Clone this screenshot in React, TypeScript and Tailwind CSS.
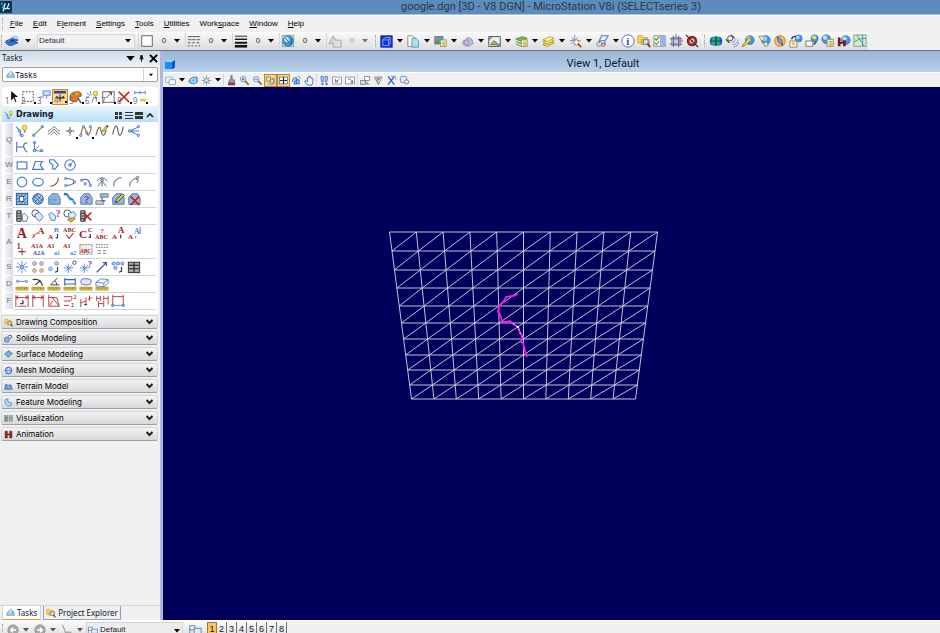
import React from 'react';

interface LineProps {
  d: string;
  s?: string;
  f?: string;
  w?: number;
}

const L: React.FC<LineProps> = ({ d, s = '#3d6fc4', f = 'none', w = 1 }) => (
  <path d={d} stroke={s} fill={f} strokeWidth={w} />
);

const C: React.FC<{ x: number; y: number; r: number; s?: string; f?: string; w?: number }> = ({ x, y, r, s = '#3d6fc4', f = 'none', w = 1 }) => (
  <circle cx={x} cy={y} r={r} stroke={s} fill={f} strokeWidth={w} />
);

const T: React.FC<{ x: number; y: number; z: number; c?: string; children: string }> = ({ x, y, z, c = '#9c1c1c', children }) => (
  <text x={x} y={y} fontSize={z} fill={c} fontWeight="bold" fontFamily="Liberation Serif, serif">
    {children}
  </text>
);

const Globe = ({ x = 8, y = 8, r = 5 }) => (
  <>
    <C x={x} y={y} r={r} s="#3b78b8" f="#3f98dd" />
    <C x={x - r / 4} y={y - r / 3} r={r / 2} s="none" f="#b7e0f7" />
  </>
);

const Sheet = ({ x = 7, y = 6 }) => (
  <>
    <rect x={x} y={y} width="7" height="8" fill="#fbf3c4" stroke="#b38a2e" />
    <path d={`M${x + 2} ${y + 2.5}h4M${x + 2} ${y + 4.5}h4M${x + 2} ${y + 6.5}h4`} stroke="#8a7b4a" strokeWidth="0.8" />
  </>
);

const Bulb = ({ x = 10, y = 4 }) => (
  <>
    <C x={x} y={y} r={2.6} s="#b99a1c" f="#f6ea3a" />
    <path d={`M${x - 1} ${y + 3.5}h2v2h-2z`} fill="#6a5a20" />
  </>
);

const Ruler = () => (
  <>
    <rect x="1" y="11.5" width="14" height="3.5" fill="#e0c83e" stroke="#9a851c" strokeWidth="0.6" />
    <path d="M3 12v2M5 12v1.5M7 12v2M9 12v1.5M11 12v2M13 12v1.5" stroke="#6d5e12" strokeWidth="0.7" />
  </>
);

const Blob = () => <L d="M2 13V6l4-4h6l3 5v7H2z" s="#44749f" f="#8db9e2" />;

const BLUE = '#4a7fd6';
const RED = '#b03030';
const DARK = '#3a3a3a';
const PINK = '#b020b0';

const icons: Record<string, React.ReactNode> = {
  logo: <><rect width="16" height="16" fill="#0c3550" /><L d="M4 14L7 3M6 9q0 3 4 0L12 3M10 8q0 3 3 2" s="#dff3fa" w={1.6} /><L d="M1 5l3-3M2 10l3-5" s="#3ea5bd" w={1.5} /></>,
  level: <><L d="M5 6l6-4 4 2-5 5z" s="#8ab0e0" f="#c9defa" /><L d="M1 8l8-3 6 2-7 4z" s="#2d4f86" f="#3b8fe0" /><L d="M0 9q3 5 8 4l7-3-6-1q-5 2-9 0z" s="#2056c0" f="#2f7be0" /><L d="M5 8l4-2 3 1-4 2z" s="none" f="#133b75" /></>,
  colorBox: <rect x="2" y="2" width="12" height="12" fill="#fff" stroke="#555" />,
  style: <L d="M1 3h14M1 6.5h4m1 0h4m1 0h4M1 10h3m2 0h3m2 0h3M1 13.5h2m2 0h2m2 0h2m2 0h2" s="#444" />,
  weight: <><L d="M1 2.5h14" s="#111" /><L d="M1 6h14" s="#111" w={1.6} /><L d="M1 10h14" s="#111" w={2.2} /><L d="M1 14h14" s="#111" w={3} /></>,
  globe: <><rect x="1.5" y="1.5" width="13" height="13" fill="#c7d9c9" stroke="#8aa7a8" /><Globe x={8} y={8} r={6} /><L d="M4 4l8 8M11 3q3 4 0 10" s="#2265a8" /></>,
  priority: <><L d="M1 11l5-9 5 9z" s="#a5a5a5" f="#d2d2d2" /><L d="M8 7h7v8H6v-4" s="#a5a5a5" f="#dedede" /></>,
  cube: <><rect x="1" y="1" width="14" height="14" fill="#1534d8" stroke="#0b1f9a" /><L d="M3.5 6h7v7h-7zM3.5 6l3-3h6v7l-2 3M10.5 6l2-3" s="#8fb6ff" /></>,
  refs: <><L d="M1 1h6l3 3v10H1z" s="#777" f="#fff" /><L d="M6 4h5l3 3v8H6z" s="#4b93a8" f="#a8e4ea" /></>,
  raster: <><rect x="1" y="2" width="10" height="9" fill="#33a3e0" stroke="#5a6b7a" /><L d="M1 11l4-5 3 5z" s="none" f="#4da03a" /><L d="M1 3h5v3H1z" s="none" f="#e07a2a" /><Sheet x={8} y={6} /></>,
  cloud: <><L d="M2 11l1-4 3-1 2-3 5 2 2 5-3 3-5 1z" s="#768da8" f="#a9c7e6" /><C x={7} y={9} r={3} s="#a06aa8" f="#dfb5d4" w={0.8} /></>,
  image: <><rect x="1" y="2" width="14" height="12" fill="#e9f3e2" stroke="#3d3d3d" /><L d="M3 12l4-5 3 2 3 3z" s="#3a6f7a" f="#d3a04a" /><L d="M2 2h4L1 7zM15 9v5h-5z" s="none" f="#6a8ac0" /></>,
  layers: <><L d="M1 5l8-3 6 2-7 4zM1 8l7 3 3-1M1 11l7 3" s="#2b8b35" f="#5ec962" /><Sheet x={8} y={6} /></>,
  stack: <><L d="M1 12l9-4 5 2-8 4z" s="#ad9223" f="#eed85e" /><L d="M1 9l9-4 5 2-8 4z" s="#ad9223" f="#f6e88a" /><L d="M1 6l9-4 5 2-8 4z" s="#ad9223" f="#fff3a8" /></>,
  aim: <><L d="M7 0v13M1 7h13M3 3l9 9M11 3l-8 8" s={BLUE} /><C x={9} y={9} r={3} s="#c07a2a" f="#fff" /><L d="M11 11l4 4" s="#8a4a1c" w={2} /></>,
  sketch: <><L d="M7 1h8l-4 6H4zM11 7v5M4 7v3" s={BLUE} w={1.3} /><C x={4} y={11} r={3} s="#4b9a5b" /><C x={9} y={12} r={2} s={RED} /></>,
  info: <><C x={8} y={8} r={7} s="#3566c9" f="#fff" /><T x={6} y={12} z={12} c="#2048c0">i</T></>,
  folders: <><L d="M1 2h5l1 2h5v6H1z" s="#e0a030" f="#fbd25a" /><L d="M5 6h9v6H5z" s="#e09a2c" f="#fbb33a" /><C x={10} y={9} r={3} s="#3978c0" f="#b9ecff" /><L d="M12 11l3 4" s="#a03020" w={2} /></>,
  checks: <><L d="M1 2h13v12H1z" s="#888" f="#f7f7ef" /><L d="M8 2h6v12H8z" s="none" f="#8eb5ec" /><L d="M2 5l2 2 3-4M2 10l2 2 3-4" s="#4b8b2b" w={1.2} /></>,
  fence: <><L d="M3 4h10v9H3z" s="#9090c0" f="#c9c9ea" /><L d="M1 5.5h14M1 11.5h14M5 2v13M11 2v13" s="#56568a" strokeDasharray="1" /><L d="M8 0v5" s="#4bbf4b" w={1.4} /><L d="M11 8h5" s="#d84bb0" w={1.4} /></>,
  noTarget: <><C x={8} y={8} r={5} s="#8a1c1c" f="#c54a4a" w={2} /><C x={8} y={8} r={2} s="#fff" /><L d="M1 1l14 14" s="#333" w={1.5} /></>,
  earth: <><rect x="1" y="3" width="14" height="10" rx="4" fill="#1564dc" /><L d="M3 4h4v8H3zM9 3h3v10H9z" s="none" f="#26ba3b" /><L d="M1 8h14M8 2v12" s="#0a3c9a" /></>,
  gps: <><C x={6} y={5} r={3} s="#444" /><L d="M1 6l4 4M7 1l4 4" s="#444" w={1.5} /><L d="M8 10q3 0 4-4M9 12q5 0 6-6M10 15q5-1 6-6" s="#6690d8" /></>,
  keyGlobe: <><Globe x={10} y={7} r={5} /><L d="M1 14l5-6 3-4 3 3-4 3-5 4z" s="#8a7a1c" f="#f4e13a" /></>,
  handGlobe: <><Globe x={10} y={7} r={5} /><L d="M2 3l4-1 3 4-3 2zM7 10l4-1 2 4-4 1z" s="#888" f="#eee7c9" /></>,
  compass: <><C x={8} y={8} r={6} s="#e0983a" f="#f8c05a" w={1.5} /><L d="M5 3l5 4 1 6-5-4z" s="#3050a0" f="#7aa4f0" /></>,
  placeA: <><Globe x={11} y={5} r={4} /><L d="M1 8h8v7H1z" s="#777" f="#fffbe0" /><C x={5} y={11} r={2} s="none" f="#f4c51c" /><L d="M3 6q1-4 5-3" s="#333" w={1.5} /></>,
  placeB: <><Globe x={11} y={5} r={4} /><C x={11} y={4} r={2} s="none" f="#f4e13a" /><L d="M1 8h8v6H1z" s="#666" f="#fff" /><L d="M10 12l3-3" s="#333" w={1.5} /></>,
  placeC: <><Globe x={6} y={6} r={5} /><Sheet x={7} y={6} /></>,
  film: <><Globe x={10} y={7} r={5} /><L d="M1 4h3v10H1zM7 7h3v7H7zM4 9h3v2H4z" s="none" f="#6b1c1c" /></>,
  map: <><rect x="1" y="1" width="14" height="13" fill="#dceab5" stroke="#7d9a9c" /><L d="M1 9q7-5 14-4M4 1l9 13M11 1v13" s="#3b8bc9" /></>,

  monitor: <><rect x="1" y="3" width="10" height="8" fill="#eef4fc" stroke="#7d9cc8" /><rect x="6" y="7" width="9" height="7" fill="#fff" stroke="#5b82c0" /></>,
  eyeBlue: <><L d="M1 10q2-8 12-7l1 7q-6 6-13 0z" s="#3b78b8" f="#65b5e8" /><C x={8} y={8} r={3} s="#fff" /></>,
  sun: <><L d="M8 1v14M1 8h14M3 3l10 10M13 3L3 13" s="#6a7f92" /><C x={8} y={8} r={3} s="#55779a" f="#cde7f2" /></>,
  brush: <><L d="M7 1h2v6h3l1 7H3l2-7h2z" s="#49607a" f="#87a9c9" /><L d="M4 11h8l1 4H3z" s="none" f="#a03535" /></>,
  zoomIn: <><C x={6} y={6} r={4} s="#4b76b8" f="#e2f0fb" /><L d="M9 9l5 5" s="#946035" w={2.5} /><L d="M4 6h4M6 4v4" s={DARK} /></>,
  zoomOut: <><C x={6} y={6} r={4} s="#4b76b8" f="#e2f0fb" /><L d="M9 9l5 5" s="#946035" w={2.5} /><L d="M4 6h4" s={DARK} /></>,
  winArea: <><L d="M2 3h6v6H2zM5 13h8V5h-3" s="#5c6670" f="#f8e394" /><C x={10} y={9} r={3} s={BLUE} /></>,
  fit: <><rect x="2" y="3" width="12" height="10" fill="#eef0f6" stroke="#5c6670" /><L d="M8 3v10M3 8h4m2 0h4" s="#222" w={1.5} /></>,
  rotate: <><L d="M2 10q0-7 6-6v9M8 7h4v6H4z" s="#2f6fc0" f="#9cc7f0" w={1.3} /><L d="M10 1l4 4" s={DARK} /></>,
  hand: <L d="M4 14l-3-5 2-1 2 2V4h2V2h2v2h2v1h2v6l-2 4z" s="#3e68c8" f="#eef4ff" w={1.3} />,
  walk: <L d="M3 2h3v8q-3 2-3-8zM9 2h3q1 9-3 8zM4 12h2v2H4zM10 12h2v2h-2z" s="#4169b8" f="#d8e4f8" w={1.3} />,
  viewPrev: <><rect x="1" y="3" width="13" height="10" fill="#fff" stroke="#65748a" /><L d="M11 6L5 10M5 6v4h4" s={DARK} /></>,
  viewNext: <><rect x="1" y="3" width="13" height="10" fill="#fff" stroke="#65748a" /><L d="M4 6q5-1 7 5M11 8v3H8" s={DARK} /></>,
  copyView: <><rect x="7" y="2" width="7" height="6" fill="#fff" stroke="#666" /><rect x="1" y="8" width="7" height="6" fill="#ddd" stroke="#666" /><L d="M10 10v3h3" s={DARK} /></>,
  clip: <L d="M2 3h11l-5 11zM4 6l7-2M5 8l5-2M7 12V4" s="#60646c" />,
  clipMask: <><L d="M3 2l9 12M12 2L3 14" s="#2f62c8" w={2} /><L d="M7 2h7v5" s="#888" /></>,
  clipBox: <><rect x="2" y="2" width="9" height="9" rx="2" fill="#dceaff" stroke="#4871b8" /><C x={11} y={10} r={3} s="#555" f="#eee" /></>,

  pointer: <L d="M7 1v11l3-3 2 5 1-1-2-5h4z" s="none" f="#111" />,
  marquee: <path d="M2 2h12v11H2z" fill="none" stroke="#333" strokeDasharray="2 1.5" />,
  chain: <><rect x="7" y="1" width="8" height="5" fill="#cfe3fb" stroke={BLUE} /><L d="M3 8h5M11 6v4" s={BLUE} /></>,
  measure: <><rect x="1" y="1" width="14" height="3" fill="#2c4d86" /><L d="M3 9h10M8 5v8M3 9l2-2M13 9l-2-2" s="#222" w={1.2} /></>,
  palette: <><L d="M1 8q1-6 8-6 6 0 5 5-4 0-5 6-8 2-8-5z" s="#9d4b14" f="#dd7b22" /><C x={5} y={5} r={1} s="none" f="#31bf46" /><C x={9} y={4} r={1} s="none" f="#fff04a" /><L d="M10 9l4 6" s="#3468d0" w={2} /></>,
  modify: <><L d="M2 3l4 4M6 1l1 5M1 8h4M10 8l-2 6M13 8v5" s={BLUE} /><Bulb x={12} y={4} /></>,
  scale: <><rect x="2" y="2" width="13" height="12" fill="#fff" stroke="#555" /><L d="M6 9l6-6M9 3h3v3" s={DARK} /></>,
  cross: <L d="M2 2l12 12M14 2L2 14" s="#d31c1c" w={2} />,
  dimension: <><L d="M2 3h12M2 1v4M14 1v4M8 1v4" s={BLUE} /><rect x="8" y="10" width="7" height="3" fill="#e0c83e" /></>,

  smartline: <><L d="M1 3l5 5v6" s={BLUE} w={1.3} /><C x={5} y={8} r={1.3} f="#cfe0fb" /><C x={8} y={13} r={1.5} f="#cfe0fb" /><Bulb x={11} y={4} /></>,
  line: <><L d="M3 13L13 3" s="#777" w={1.2} /><C x={3} y={13} r={1.3} f="#9cc0f5" /><C x={13} y={3} r={1.3} f="#9cc0f5" /></>,
  multiline: <L d="M1 9l7-6 7 6M1 12l7-6 7 6M4 13l4-4 4 4" s="#5c6778" />,
  point: <><L d="M8 3v10M3 8h10" s="#776340" w={1.2} /><C x={8} y={8} r={1.6} f="#b4d0f8" /></>,
  curve: <><L d="M2 13Q5-3 8 8t6-4" s="#9b7038" w={1.3} /><C x={2} y={13} r={1.3} f="#cfe0fb" /><C x={5} y={3} r={1.3} f="#cfe0fb" /><C x={9} y={10} r={1.3} f="#cfe0fb" /><C x={13} y={3} r={1.3} f="#cfe0fb" /></>,
  freehand: <><L d="M1 13Q5-2 7 8t6-1" s="#555" w={1.2} /><L d="M8 8l5-6 2 1-5 6z" s="#9b7b1c" f="#ecd83a" /><L d="M13 2l2 1" s="#c02020" w={2} /></>,
  bspline: <L d="M2 12C4 0 7 0 8 8S12 14 14 3" s="#666" w={1.3} />,
  spread: <><L d="M3 8l11-5M3 8l11 0M3 8l11 5" s={BLUE} w={1.2} /><C x={3} y={8} r={1.5} f="#cfe0fb" /><C x={13} y={3} r={1.3} f="#cfe0fb" /><C x={13} y={13} r={1.3} f="#cfe0fb" /></>,
  bisect: <L d="M2 2v12M2 8h8M14 3q-5 1-4 5t4 6" s="#4d6a91" w={1.2} />,
  perp: <><L d="M4 2v10l10 1M4 12l5-5" s="#4a75b8" /><C x={4} y={3} r={1.3} f="#9cc0f5" /><C x={4} y={12} r={1.5} f="#9cc0f5" /><C x={12} y={12} r={1.3} f="#9cc0f5" /></>,
  block: <rect x="2.5" y="4.5" width="11" height="8" fill="#fff" stroke={BLUE} strokeWidth="1.4" />,
  shape: <L d="M2 13l3-9h8q-3 3-2 5l3 4z" s={BLUE} w={1.4} />,
  orthoShape: <L d="M3 2h5l5 6-4 5-3-1 1-4-4-3z" s={BLUE} w={1.4} />,
  polygon: <><C x={8} y={8} r={6} s={BLUE} w={1.3} /><C x={8} y={8} r={1.5} f="#9cc0f5" /><L d="M8 8l4-5" s={BLUE} /></>,
  circle: <C x={8} y={8} r={5.5} s={BLUE} w={1.4} />,
  ellipse: <ellipse cx="8" cy="8" rx="6" ry="4.3" fill="none" stroke={BLUE} strokeWidth="1.4" />,
  arc: <L d="M13 3q0 8-9 10" s="#8a6236" w={1.4} />,
  arcEdge: <><L d="M3 4q10 0 10 4-2 4-10 4" s="#4b68a8" w={1.2} /><C x={3} y={4} r={1.3} f="#cfe0fb" /><C x={13} y={8} r={1.3} f="#cfe0fb" /><C x={3} y={12} r={1.3} f="#cfe0fb" /></>,
  halfEllipse: <><L d="M3 6q8-4 10 6" s="#4b68a8" w={1.2} /><C x={3} y={6} r={1.3} f="#cfe0fb" /><C x={7} y={10} r={1.3} f="#cfe0fb" /><C x={13} y={12} r={1.3} f="#cfe0fb" /></>,
  quarter: <><L d="M2 7q6-8 12 0M8 7l-5 6M8 7l5 6M8 7v6" s="#555" /><C x={8} y={6} r={1.6} f="#9cc0f5" /></>,
  arcRadius: <L d="M3 13q0-9 9-10" s="#7187a8" w={1.2} />,
  arcAngle: <><L d="M3 13q0-6 6-9l4 2-2 3" s="#555" /><C x={12} y={3} r={1.5} f="#f0bb68" s="#777" /></>,

  hatch: <><rect x="1.5" y="1.5" width="13" height="13" fill="#9cc6ee" stroke="#174d8b" /><L d="M2 5l3-3M2 9l7-7M2 13l11-11M6 14l7-7M10 14l3-3" s="#174d8b" /><rect x="5" y="5" width="5" height="6" fill="#fff" stroke="#174d8b" /></>,
  crosshatch: <><C x={8} y={8} r={6} s="#174d8b" f="#a3cbf3" /><L d="M3 4l9 9M5 2l8 8M3 8l5 5M12 4l-8 8M8 2l-6 6M14 7l-6 6" s="#174d8b" w={0.8} /></>,
  patArea: <><Blob /><L d="M4 14V6M7 14V4M10 14V5M2 9h11" s="#6395bf" w={0.6} /></>,
  patLine: <><L d="M1 2l4 1 2 4 4 2 3 5" s="#2a67b8" w={2.5} /><L d="M2 4l3 0 2 5 5 1 1 4" s="#8cd8ef" /></>,
  patAsk: <><Blob /><T x={6} y={12} z={12} c={PINK}>?</T></>,
  patMatch: <><L d="M6 2h9v4H6z" s="#777" f="#8dbde8" /><L d="M1 10h9v4H1z" s="#777" f="#b3d4ef" /><L d="M8 6v4h4" s={DARK} /></>,
  patEdit: <><Blob /><L d="M5 12l1-3 7-7 2 2-7 7z" s="#222" f="#f4dc3a" /></>,
  patDelete: <><Blob /><L d="M4 5l10 10M14 5L4 15" s="#d31c1c" w={1.8} /></>,

  tagA: <><L d="M2 2h5v12H2z" s="#222" f="#bbb" /><L d="M2 5h5M2 8h5M2 11h5" s="#222" /><L d="M8 7l3-2 4 4-2 5H9z" s="#3b67a8" f="#fff" /></>,
  tagB: <><C x={5} y={5} r={4} s="#444" /><L d="M4 6l6-2 4 5-4 5-4-3z" s="#4477b8" f="#d8ebfc" /></>,
  tagAsk: <><L d="M2 6l3-2 5 4-1 5H5z" s="#4477b8" f="#d8ebfc" /><T x={10} y={9} z={11} c={PINK}>?</T></>,
  tagC: <><C x={5} y={5} r={4} s="#444" /><L d="M6 5l6-2 3 4-4 5-4-2z" s="#4477b8" f="#d8ebfc" /><L d="M5 12l4 3 5-4-3-1z" s="#a36b1c" f="#ebb24a" /></>,
  tagDel: <><L d="M2 2h5v12H2z" s="#222" f="#bbb" /><L d="M2 5h5M2 8h5M2 11h5" s="#222" /><L d="M5 4l9 9M14 4l-9 9" s="#c02020" w={1.8} /></>,

  text: <T x={2} y={14} z={16}>A</T>,
  textNote: <><T x={8} y={9} z={10}>A</T><L d="M1 13l3-1-2-3M3 12l3-4h3" s={RED} /></>,
  textAB: <><T x={1} y={15} z={8}>A</T><T x={8} y={7} z={8} c={BLUE}>B</T><L d="M12 9v4l-2 1" s={DARK} w={1.4} /></>,
  textCheck: <><T x={0} y={7} z={7}>ABC</T><L d="M4 10l3 4 5-6" s={RED} w={1.3} /></>,
  textCC: <><T x={0} y={14} z={13}>C</T><T x={10} y={7} z={8}>C</T><L d="M13 9v4h-2" s={DARK} w={1.4} /></>,
  textAskAbc: <><T x={0} y={15} z={7}>ABC</T><T x={6} y={8} z={8} c={PINK}>?</T></>,
  textAA: <><T x={1} y={15} z={8}>A</T><T x={8} y={8} z={10}>A</T><L d="M11 10v4" s={DARK} w={1.4} /></>,
  textBlueA: <><T x={1} y={15} z={8}>A</T><T x={8} y={9} z={9} c={BLUE}>A</T><L d="M15 1v8M10 11v3" s={BLUE} w={1.2} /></>,
  node: <><T x={2} y={8} z={9}>1</T><L d="M8 7v8M4 11h8" s={RED} w={1.2} /></>,
  copyInc: <><T x={0} y={7} z={7}>A1A</T><T x={2} y={15} z={7} c="#4d4da8">A2A</T></>,
  editInc: <><T x={0} y={7} z={7}>A1</T><T x={8} y={15} z={7} c={BLUE}>a1</T></>,
  copyEdit: <><T x={0} y={7} z={7}>A1</T><T x={8} y={15} z={7} c={BLUE}>a2</T></>,
  fieldText: <><path d="M1 3h14v11H1z" fill="#eee" stroke="#777" strokeDasharray="2 1" /><T x={1} y={12} z={6}>ABC</T></>,
  fieldLines: <><path d="M1 3h14M1 6h14" stroke="#666" strokeDasharray="2 1" /><L d="M3 10h4m2 0h4M3 13h4m2 0h4" s="#777" /></>,

  cell: <><L d="M8 1v14M1 8h14M3 3l10 10M13 3L3 13" s={BLUE} /><C x={8} y={8} r={1.5} f="#fff" /></>,
  matrix: <><C x={4} y={4} r={2.2} s="#9a9a9a" f="#c4c4c4" /><C x={12} y={4} r={2.2} s="#9a9a9a" f="#c4c4c4" /><C x={4} y={12} r={2.2} s="#b89878" f="#d8c4ae" /><C x={12} y={12} r={2.2} s="#b89878" f="#d8c4ae" /></>,
  cellSel: <><C x={4} y={10} r={2.2} s="#6aa0e0" f="#a9cbf4" /><C x={11} y={4} r={2.2} s="#6aa0e0" f="#a9cbf4" /><L d="M12 8v5l-3 1" s={DARK} w={1.4} /></>,
  cellDef: <><L d="M6 4v11M1 9h11M3 6l7 7M10 6l-7 7" s={BLUE} /><C x={13} y={3} r={2} s={DARK} /></>,
  cellAsk: <><L d="M6 4v11M1 9h11M3 6l7 7M10 6l-7 7" s={BLUE} /><T x={10} y={8} z={10} c={PINK}>?</T></>,
  arrowNE: <L d="M2 14L13 3M9 3h4v4M8 8l5-5" s="#345a98" w={1.3} />,
  cells: <><C x={3} y={4} r={1.8} s={BLUE} f="#a9cbf4" /><C x={8} y={4} r={1.8} s={BLUE} f="#a9cbf4" /><C x={13} y={4} r={1.8} s={BLUE} f="#a9cbf4" /><C x={5} y={9} r={1.8} s={BLUE} f="#a9cbf4" /><L d="M12 8v5l-3 1" s={DARK} w={1.4} /></>,
  table: <><rect x="1.5" y="2.5" width="13" height="12" fill="#aaa" stroke="#222" /><L d="M2 6h12M2 10h12M8 3v11" s="#222" w={1.3} /></>,

  dist: <><L d="M2 5h12" /><C x={3} y={5} r={1.3} f="#fff" /><C x={13} y={5} r={1.3} f="#fff" /><Ruler /></>,
  radius: <><L d="M2 3q9-2 11 7M5 9l6-5" s="#333" w={1.3} /><Ruler /></>,
  angle: <><L d="M12 1L4 9h10M9 4q2 2 2 5" s="#333" /><Ruler /></>,
  length: <><L d="M2 1v9M14 1v9M2 3h12M2 8h12" s="#3065b8" w={1.2} /><Ruler /></>,
  area: <><rect x="2" y="2" width="12" height="7" rx="3.5" fill="#e3e3ff" stroke="#5868c8" /><Ruler /></>,
  volume: <><Ruler /><L d="M1 6l6-4 8 1-5 4zM1 6v4l9 1V7M10 11l5-4V3" s={BLUE} f="#fff" /></>,

  dimA: <><L d="M1 1v14M15 1v14M1 4h14M4 2L1 4l3 2M12 2l3 2-3 2M3 14h10" s={RED} /><L d="M9 7v4H6" s={DARK} w={1.5} /></>,
  dimB: <L d="M2 1v14M14 1v14M2 4h12M5 2L2 4l3 2M11 2l3 2-3 2" s={RED} />,
  dimC: <L d="M2 1v13h12L5 3M2 4h9l3 10M7 8q-3 1-3 5" s={RED} />,
  dimD: <><L d="M1 3h9M1 8h7M1 13h6M10 3q1 5-3 5" s={RED} /><T x={12} y={6} z={6} c={DARK}>2</T><T x={9} y={15} z={6} c={DARK}>2</T></>,
  dimE: <><L d="M2 15V6M8 13V4M2 10l6-2M10 6l5-2M12 2v6" s={RED} /><L d="M6 12h3" s={DARK} w={1.5} /></>,
  dimF: <L d="M2 2v6M6 2v6M2 5h4M4 15V8M10 15V8M4 11h6M10 7V2M15 12V2M10 5h5" s={RED} />,
  dimG: <><L d="M2 1v12M14 1v12M2 3h12" s={RED} /><L d="M2 13h12" s={BLUE} /><C x={2} y={13} r={1.4} f="#9cc0f5" /><C x={14} y={13} r={1.4} f="#9cc0f5" /></>,

  tasks: <><L d="M1 13l2-6h11l1 6z" s="#3b78b8" f="#9fd0f2" /><L d="M4 7l4-5 4 3-2 5" s="#3566b0" f="#d5eafa" /></>,
  solids: <><L d="M1 7l5-2 3 2v6l-4 2-4-2z" s="#33506f" f="#8ab4e0" /><L d="M7 4q4-4 7 0l-3 5" s="#223e60" w={1.5} /></>,
  surface: <L d="M1 7l7-6 7 5-7 7z" s="#30628f" f="#67b0e8" />,
  mesh: <><C x={8} y={8} r={6} s="#2d61d0" f="#dbe8ff" w={1.5} /><ellipse cx="8" cy="8" rx="3" ry="6" fill="none" stroke="#2d61d0" /><L d="M2 8h12" s="#2d61d0" /></>,
  terrain: <L d="M1 13l2-9 5 4 4-3 3 8zM3 4l5 9 4-8" s="#30568f" f="#6daaea" />,
  feature: <L d="M2 3l5-2v6l7 2-2 5H6l-4-5z" s="#3b78c0" f="#b9daf8" w={1.3} />,
  visual: <><rect x="1" y="3" width="6" height="10" fill="#999" stroke="#888" /><rect x="9" y="3" width="6" height="10" fill="#b4b4c4" stroke="#888" /><L d="M2 6h4M10 6h4M2 9h4M10 9h4" s="#666" /></>,
  anim: <L d="M2 2h4v5h4V2h4v12h-4V9H6v5H2z" s="#6b1818" f="#8a2a2a" />,
  back: <><C x={8} y={8} r={7} s="#909090" f="#a8a8a8" /><L d="M12 8H5M8 5L5 8l3 3" s="#fff" w={2} /></>,
  forward: <><C x={8} y={8} r={7} s="#909090" f="#a8a8a8" /><L d="M4 8h7M8 5l3 3-3 3" s="#fff" w={2} /></>,
  acs: <L d="M2 1l4 10h8M6 11L3 14" s="#909090" w={1.3} />,
  models: <><L d="M2 3h6v5H2zM2 6v8h4" s="#6079b0" /><rect x="7" y="6" width="8" height="6" fill="#e0eafa" stroke="#5676b8" /></>,
};

const Icon: React.FC<{ name: string; className?: string }> = ({ name, className = 'size-[14px]' }) => (
  <svg viewBox="0 0 16 16" className={`shrink-0 ${className}`} aria-hidden="true">
    {icons[name]}
  </svg>
);

const Caret: React.FC<{ className?: string }> = ({ className = 'text-black' }) => (
  <svg viewBox="0 0 6 4" className={`h-1 w-[6px] shrink-0 ${className}`} aria-hidden="true">
    <path d="M0 0h6L3 3.6z" fill="currentColor" />
  </svg>
);

const Grip = () => <span className="mx-px h-3 w-px shrink-0 border-l border-dotted border-gray-400" />;

const menus = ['File', 'Edit', 'Element', 'Settings', 'Tools', 'Utilities', 'Workspace', 'Window', 'Help'];
const mnemonics = [0, 0, 1, 0, 0, 0, 4, 0, 0];

const attributes = ['colorBox', 'style', 'weight', 'globe', 'priority'];
const primary = ['cube', 'refs', 'raster', 'cloud', 'image', 'layers', 'stack', 'aim', 'sketch'];
const primaryEnd = ['info', 'folders', 'checks', 'fence', 'noTarget'];
const geo = ['earth', 'gps', 'keyGlobe', 'handGlobe', 'compass', 'placeA', 'placeB', 'placeC', 'film', 'map'];
const viewTools = ['monitor', '>', 'eyeBlue', 'sun', '>', '|', 'brush', 'zoomIn', 'zoomOut', 'winArea', 'fit', 'rotate', 'hand', '|', 'walk', 'viewPrev', 'viewNext', '|', 'copyView', 'clip', 'clipMask', 'clipBox'];
const mainTools = ['pointer', 'marquee', 'chain', 'measure', 'palette', 'modify', 'scale', 'cross', 'dimension'];

const toolRows = [
  { key: 'Q', tall: true, tools: ['smartline', 'line', 'multiline', 'point', 'curve', 'freehand', 'bspline', 'spread', 'bisect', 'perp'] },
  { key: 'W', tools: ['block', 'shape', 'orthoShape', 'polygon'] },
  { key: 'E', tools: ['circle', 'ellipse', 'arc', 'arcEdge', 'halfEllipse', 'quarter', 'arcRadius', 'arcAngle'] },
  { key: 'R', tools: ['hatch', 'crosshatch', 'patArea', 'patLine', 'patAsk', 'patMatch', 'patEdit', 'patDelete'] },
  { key: 'T', tools: ['tagA', 'tagB', 'tagAsk', 'tagC', 'tagDel'] },
  { key: 'A', tall: true, tools: ['text', 'textNote', 'textAB', 'textCheck', 'textCC', 'textAskAbc', 'textAA', 'textBlueA', 'node', 'copyInc', 'editInc', 'copyEdit', 'fieldText', 'fieldLines'] },
  { key: 'S', tools: ['cell', 'matrix', 'cellSel', 'cellDef', 'cellAsk', 'arrowNE', 'cells', 'table'] },
  { key: 'D', tools: ['dist', 'radius', 'angle', 'length', 'area', 'volume'] },
  { key: 'F', tools: ['dimA', 'dimB', 'dimC', 'dimD', 'dimE', 'dimF', 'dimG'] },
];

// tools with a fly-out get a small black corner mark
const flyouts = ['point', 'curve'];

const sections = [
  { icon: 'folders', label: 'Drawing Composition' },
  { icon: 'solids', label: 'Solids Modeling' },
  { icon: 'surface', label: 'Surface Modeling' },
  { icon: 'mesh', label: 'Mesh Modeling' },
  { icon: 'terrain', label: 'Terrain Model' },
  { icon: 'feature', label: 'Feature Modeling' },
  { icon: 'visual', label: 'Visualization' },
  { icon: 'anim', label: 'Animation' },
];

const MenuBar = () => (
  <nav className="flex h-[17px] shrink-0 items-center border-t border-white bg-[#f0f0f0] pl-px text-[8px] text-black">
    <Grip />
    <div className="flex gap-[10px] pl-[6px]">
      {menus.map((m, i) => (
        <button key={m}>
          {m.slice(0, mnemonics[i])}
          <span className="underline">{m[mnemonics[i]]}</span>
          {m.slice(mnemonics[i] + 1)}
        </button>
      ))}
    </div>
  </nav>
);

const Toolbar = () => (
  <div className="flex h-[19px] shrink-0 items-center border-b border-gray-500 bg-[#f0f0f0] text-[8px] text-gray-800">
    <div className="flex h-full items-center bg-linear-to-b from-[#fafafa] to-[#dcdcdc]">
      <Grip />
      <button aria-label="Active level" className="flex w-[34px] items-center gap-[6px] pl-[2px]">
        <Icon name="level" />
        <Caret />
      </button>
      <div className="relative">
        <select aria-label="Level" className="h-[15px] w-[98px] appearance-none border border-gray-300 bg-[#f1f1f1] pl-px text-[8px]">
          <option>Default</option>
        </select>
        <span className="pointer-events-none absolute top-[5px] right-1"><Caret /></span>
      </div>
      <div className="ml-[3px] flex">
        {attributes.map((a) => (
          <button key={a} aria-label={a} className="flex h-4 w-[47px] items-center border-l border-gray-300 pl-px">
            <Icon name={a} />
            <span className={a === 'priority' ? 'w-5 text-center text-gray-400' : 'w-5 text-center'}>0</span>
            <Caret className={a === 'priority' ? 'text-gray-500' : 'text-black'} />
          </button>
        ))}
      </div>
    </div>
    <div className="ml-px flex h-full items-center bg-linear-to-b from-[#fafafa] to-[#dcdcdc] pr-[2px]">
      <Grip />
      {primary.map((p) => (
        <button key={p} aria-label={p} className="flex w-[27px] items-center gap-1 pl-[3px]">
          <Icon name={p} className="size-[13px]" />
          <Caret />
        </button>
      ))}
      {primaryEnd.map((p) => (
        <button key={p} aria-label={p} className="flex w-4 justify-center">
          <Icon name={p} />
        </button>
      ))}
    </div>
    <div className="ml-px flex h-full items-center bg-linear-to-b from-[#fafafa] to-[#dcdcdc]">
      <Grip />
      <span className="w-[2px]" />
      {geo.map((g) => (
        <button key={g} aria-label={g} className="flex w-4 justify-center">
          <Icon name={g} />
        </button>
      ))}
    </div>
  </div>
);

const TaskPanel = () => (
  <aside className="flex w-[160px] shrink-0 flex-col bg-[#f0f0f0] font-['Noto_Sans',sans-serif] text-[8px] text-gray-900">
    <div className="flex h-[14px] shrink-0 items-center bg-linear-to-b from-[#cbdcea] to-[#eaf0f5] pr-[2px] pl-[2px]">
      <h2 className="flex-1">Tasks</h2>
      <button aria-label="Panel menu"><svg viewBox="0 0 10 6" className="h-[5px] w-[9px]"><path d="M0 0h10L5 6z" /></svg></button>
      <button aria-label="Pin" className="ml-1 mr-[5px]"><svg viewBox="0 0 6 8" className="h-[7px] w-[5px]"><path d="M1.5 0h3v4h1v1H3.5v3h-1V5H.5V4h1z" /></svg></button>
      <button aria-label="Close"><svg viewBox="0 0 10 10" className="size-[9px]"><path d="M1 1l8 8M9 1L1 9" stroke="#000" strokeWidth="2.2" /></svg></button>
    </div>
    <div className="relative mx-[2px] mt-[2px] flex h-[15px] shrink-0 items-center rounded-xs border border-gray-400 bg-white pl-[3px]">
      <Icon name="tasks" className="size-[9px]" />
      <select aria-label="Task list" className="h-full flex-1 appearance-none font-['Inter',sans-serif]">
        <option>Tasks</option>
      </select>
      <span className="pointer-events-none absolute top-0 right-0 flex h-[13px] w-[14px] items-center justify-center border-l border-gray-300"><Caret className="scale-75 text-black" /></span>
    </div>
    <div className="mx-[2px] mt-[5px] flex h-[19px] shrink-0 items-center rounded-sm bg-white pl-[2px]">
      {mainTools.map((t, i) => (
        <button key={t} aria-label={t} className={t === 'measure' ? 'relative flex size-4 items-center justify-center border border-[#c08a2c] bg-[#f8d999]' : 'relative flex size-4 items-center justify-center'}>
          <Icon name={t} />
          <span className="absolute bottom-px left-px leading-[7px] text-gray-500">{i + 1}</span>
          {i > 0 && <span className="absolute right-0 bottom-px size-[2px] bg-black" />}
        </button>
      ))}
    </div>
    <div className="mx-[2px] mt-[2px] flex h-[14px] shrink-0 items-center bg-linear-to-b from-[#e2f3fd] to-[#b8def5] pr-1 pl-[2px]">
      <Icon name="smartline" className="size-[10px]" />
      <h3 className="flex-1 pl-[2px] font-['DejaVu_Sans',sans-serif] font-bold">Drawing</h3>
      <svg viewBox="0 0 41 9" className="h-[9px] w-[41px]">
        <path d="M2 1h3v3H2zM6 1h3v3H6zM2 5h3v3H2zM6 5h3v3H6zM12 1h8v1h-8zM12 4h8v1h-8zM12 7h8v1h-8zM22 1h8v3h-8zM22 5h8v3h-8z" fill="#333" />
        <path d="M34 6l3-3 3 3" fill="none" stroke="#222" strokeWidth="1.6" />
      </svg>
    </div>
    <div className="mx-[2px] flex shrink-0 flex-col bg-white pt-px pb-1">
      {toolRows.map((row) => (
        <div key={row.key} className={row.tall ? 'flex h-[34px]' : 'flex h-[17px]'}>
          <div className="ml-[3px] flex w-2 items-center justify-center border-b border-white bg-linear-to-r from-[#f2f2f7] to-[#dadae4] font-['Liberation_Sans',sans-serif] text-gray-500">{row.key}</div>
          <div className="mr-[2px] flex flex-1 flex-wrap content-start border-b border-gray-300 pl-px">
            {row.tools.map((t) => (
              <button key={t} aria-label={t} className="relative flex size-4 items-center justify-center">
                <Icon name={t} />
                {flyouts.includes(t) && <span className="absolute right-0 bottom-0 size-[2px] bg-black" />}
              </button>
            ))}
          </div>
        </div>
      ))}
    </div>
    <div className="mt-px flex flex-1 flex-col gap-[2px] pr-[2px] pl-px">
      {sections.map((s) => (
        <button key={s.label} className="flex h-[14px] shrink-0 items-center rounded-xs border border-gray-300 border-b-gray-400 bg-linear-to-b from-[#f4f4f4] to-[#d9d9d9] pr-1 pl-[2px] text-left">
          <Icon name={s.icon} className="size-[9px]" />
          <span className="flex-1 pl-[3px] font-['Inter',sans-serif] text-black">{s.label}</span>
          <svg viewBox="0 0 7 6" className="h-[6px] w-[7px]"><path d="M.5 1l3 3 3-3" fill="none" stroke="#222" strokeWidth="2" /></svg>
        </button>
      ))}
    </div>
    <div className="flex h-[15px] shrink-0 gap-[2px] border-t border-gray-300 pl-[2px]">
      <button className="flex h-[14px] items-center gap-[2px] border-x border-b border-gray-300 border-b-[#d9a32e] bg-white px-[3px]">
        <Icon name="tasks" className="size-[9px]" />
        Tasks
      </button>
      <button className="flex h-[14px] items-center gap-[2px] border-x border-b border-gray-400 px-[2px]">
        <Icon name="folders" className="size-[10px]" />
        Project Explorer
      </button>
    </div>
  </aside>
);

// row heights shrink towards the bottom, as in a perspective view
const rowYs = [145, 164, 183, 201, 219, 236, 252, 268, 283, 298, 312];
const COLS = 10;

const gridX = (col: number, row: number) => {
  const t = (rowYs[row] - rowYs[0]) / (rowYs[10] - rowYs[0]);
  const left = 226.5 + 22 * t;
  const right = 494.5 - 22 * t;
  return left + ((right - left) * col) / COLS;
};

const Mesh = () => {
  const d: string[] = [];
  rowYs.forEach((y, r) => d.push(`M${gridX(0, r)} ${y}L${gridX(COLS, r)} ${y}`));
  for (let c = 0; c <= COLS; c++) {
    d.push(`M${gridX(c, 0)} ${rowYs[0]}L${gridX(c, 10)} ${rowYs[10]}`);
  }
  for (let r = 0; r < 10; r++) {
    for (let c = 0; c < COLS; c++) {
      d.push(`M${gridX(c, r + 1)} ${rowYs[r + 1]}L${gridX(c + 1, r)} ${rowYs[r]}`);
    }
  }
  return (
    <svg className="size-full" role="img" aria-label="Terrain mesh">
      <path d={d.join('')} fill="none" stroke="#d6d6e8" strokeWidth="0.9" />
      <path d="M355 207l-5 2-7 1-2 4-5 5-1 5 3 6 1 5h4l4-1 3 3 5 3 2 6 3 4-2 5 2 1 2 8 2 6" fill="none" stroke="#ff18e8" strokeWidth="1.8" />
      <path d="M350 236l5 4 3 7 2 5" fill="none" stroke="#b9a8ff" strokeWidth="1.2" strokeDasharray="2 2" />
      <path d="M354 239h2v2h-2z" fill="#fff" />
    </svg>
  );
};

const ViewWindow = () => (
  <main className="flex min-w-0 flex-1 flex-col border-l-[3px] border-[#b3b6dc] bg-[#00005c]">
    <div className="flex h-[21px] shrink-0 items-center bg-linear-to-b from-[#98b5d5] to-[#b8d0e9] pt-1">
      <svg viewBox="0 0 10 10" className="ml-[2px] size-[10px]" aria-hidden="true">
        <path d="M0 3l3-2h7v7l-2 2H0z" fill="#1d8cf0" />
        <path d="M0 3l3-2h7L7 3z" fill="#9bdcff" />
        <path d="M7 3l3-2v7l-3 2z" fill="#0b51c0" />
      </svg>
      <h1 className="flex-1 pt-px pl-[91px] text-center font-['Roboto',sans-serif] text-[11px] leading-4 text-gray-900">View 1, Default</h1>
    </div>
    <div className="flex h-[15px] shrink-0 items-center border-t border-white bg-[#f0f0f0] pl-px">
      {viewTools.map((t, i) => {
        if (t === '>') return <span key={i} className="flex w-[10px] justify-center"><Caret /></span>;
        if (t === '|') return <span key={i} className="h-3 w-[2px] border-l border-gray-300" />;
        const active = t === 'winArea' || t === 'fit';
        return (
          <button key={i} aria-label={t} className={active ? 'flex size-[13px] items-center justify-center border border-[#b98a2c] bg-[#f6d38a]' : 'flex size-[13px] items-center justify-center'}>
            <Icon name={t} className="size-[11px]" />
          </button>
        );
      })}
    </div>
    <div className="min-h-0 flex-1">
      <Mesh />
    </div>
  </main>
);

const StatusBar = () => (
  <footer className="flex h-[13px] shrink-0 items-start overflow-hidden border-t border-white bg-[#f0f0f0] text-[8px] text-gray-900">
    <div className="flex h-[18px] items-center bg-linear-to-b from-[#fafafa] to-[#dcdcdc] pl-px">
      <Grip />
      {['back', 'forward', 'acs'].map((n) => (
        <button key={n} aria-label={n} className="flex w-[27px] items-center gap-1 pl-[3px]">
          <Icon name={n} className="size-[12px]" />
          <Caret className="text-gray-600" />
        </button>
      ))}
      <div className="relative ml-px flex h-4 items-center border border-gray-300 bg-[#ececec]">
        <Icon name="models" className="size-[11px]" />
        <select aria-label="View group" className="h-[14px] w-[84px] appearance-none pl-[2px]">
          <option>Default</option>
        </select>
        <span className="pointer-events-none absolute top-[6px] right-[2px]"><Caret /></span>
      </div>
      <button aria-label="Manage view groups" className="mx-[5px]">
        <Icon name="models" />
      </button>
      <div className="flex text-[9px]">
        {[1, 2, 3, 4, 5, 6, 7, 8].map((n) => (
          <button key={n} className={n === 1 ? 'h-4 w-[10px] border border-[#a87628] bg-[#f9c566]' : 'h-4 w-[10px] border-r border-gray-500'}>
            {n}
          </button>
        ))}
      </div>
    </div>
  </footer>
);

export default function App() {
  return (
    <div className="flex h-screen flex-col overflow-hidden bg-[#f0f0f0] font-['Liberation_Sans',sans-serif]">
      <header className="flex h-[15px] shrink-0 items-center border-b border-[#a9c2dc] bg-[#5b8cbc]">
        <Icon name="logo" className="size-[12px]" />
        <p className="flex-1 pl-[150px] text-center font-['Roboto',sans-serif] text-[11px] leading-[14px] text-[#26384a]">
          google.dgn [3D - V8 DGN] - MicroStation V8i (SELECTseries 3)
        </p>
      </header>
      <MenuBar />
      <Toolbar />
      <div className="flex min-h-0 flex-1">
        <TaskPanel />
        <ViewWindow />
      </div>
      <StatusBar />
    </div>
  );
}
